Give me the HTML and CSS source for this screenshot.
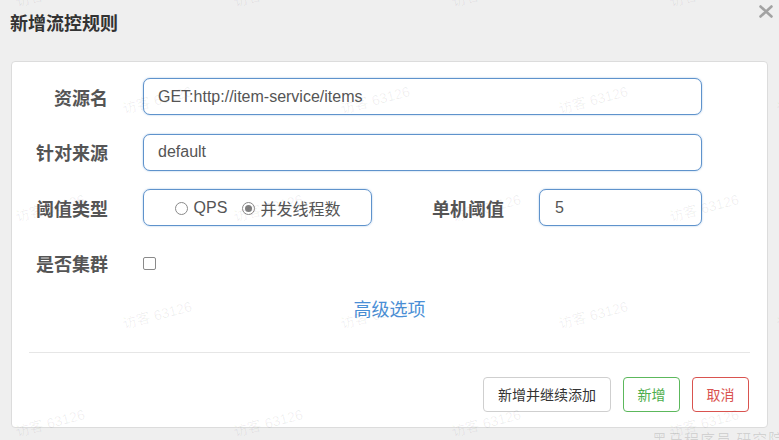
FILE: index.html
```html
<!DOCTYPE html>
<html lang="zh-CN">
<head>
<meta charset="utf-8">
<title>新增流控规则</title>
<link rel="stylesheet" href="styles.css">
</head>
<body>
<header class="dlg-head">
  <h1 class="dlg-title">新增流控规则</h1>
  <span class="dlg-close" aria-label="关闭"><svg width="14" height="13" viewBox="0 0 14 13"><path d="M1.5 1.5 L12.5 11.5 M12.5 1.5 L1.5 11.5" stroke="#a3a3a3" stroke-width="2.6" stroke-linecap="round"/></svg></span>
</header>
<section class="card">
  <div class="form-row">
    <label class="f-label">资源名</label>
    <input class="f-input f-wide" value="GET:http://item-service/items" readonly>
  </div>
  <div class="form-row">
    <label class="f-label">针对来源</label>
    <input class="f-input f-wide" value="default" readonly>
  </div>
  <div class="form-row">
    <label class="f-label">阈值类型</label>
    <div class="radio-box">
      <span class="radio"></span><span class="radio-text">QPS</span>
      <span class="radio radio-on"></span><span class="radio-text radio-text-cn">并发线程数</span>
    </div>
    <label class="f-label f-label-mid">单机阈值</label>
    <input class="f-input f-small" value="5" readonly>
  </div>
  <div class="form-row">
    <label class="f-label">是否集群</label>
    <span class="checkbox"></span>
  </div>
  <div class="adv-link">高级选项</div>
  <div class="divider"></div>
  <div class="btn-row">
    <button class="btn">新增并继续添加</button>
    <button class="btn btn-ok">新增</button>
    <button class="btn btn-cancel">取消</button>
  </div>
</section>
<div class="wm-clip">
  <div class="wm-layer">
    <div class="wm-row wm-row-b"><span class="wm-cell">访客 63126</span><span class="wm-cell">访客 63126</span><span class="wm-cell">访客 63126</span><span class="wm-cell">访客 63126</span><span class="wm-cell">访客 63126</span></div>
    <div class="wm-row wm-row-a"><span class="wm-cell">访客 63126</span><span class="wm-cell">访客 63126</span><span class="wm-cell">访客 63126</span><span class="wm-cell">访客 63126</span><span class="wm-cell">访客 63126</span></div>
    <div class="wm-row wm-row-b"><span class="wm-cell">访客 63126</span><span class="wm-cell">访客 63126</span><span class="wm-cell">访客 63126</span><span class="wm-cell">访客 63126</span><span class="wm-cell">访客 63126</span></div>
    <div class="wm-row wm-row-a"><span class="wm-cell">访客 63126</span><span class="wm-cell">访客 63126</span><span class="wm-cell">访客 63126</span><span class="wm-cell">访客 63126</span><span class="wm-cell">访客 63126</span></div>
    <div class="wm-row wm-row-b"><span class="wm-cell">访客 63126</span><span class="wm-cell">访客 63126</span><span class="wm-cell">访客 63126</span><span class="wm-cell">访客 63126</span><span class="wm-cell">访客 63126</span></div>
  </div>
  <div class="wm-foot">黑马程序员 研究院</div>
</div>
</body>
</html>
```
FILE: styles.css
```css
* { box-sizing: border-box; }
html, body { margin: 0; padding: 0; }
body {
  background: #efefef;
  font-family: "Liberation Sans", "Noto Sans CJK SC", sans-serif;
  width: 779px;
  height: 440px;
  overflow: hidden;
  position: relative;
}
.dlg-head {
  height: 61px;
  display: flex;
  justify-content: space-between;
  align-items: flex-start;
  padding: 0 6px 0 10px;
}
.dlg-title {
  margin: 0;
  padding-top: 10px;
  font-size: 18px;
  line-height: 24px;
  font-weight: bold;
  color: #333;
  font-family: "Noto Sans CJK SC", sans-serif;
}
.dlg-close { margin-top: 5px; display: block; line-height: 0; }
.card {
  margin: 0 11px;
  height: 367px;
  background: #fff;
  border: 1px solid #dcdcdc;
  border-radius: 4px;
  padding: 16px 0 15px;
}
.form-row {
  display: flex;
  align-items: center;
  height: 37px;
  margin-bottom: 18.5px;
}
.form-row:nth-child(4) { margin-bottom: 0; }
.f-label {
  flex: none;
  width: 96px;
  margin-right: 35px;
  text-align: right;
  font-family: "Noto Sans CJK SC", sans-serif;
  font-size: 18px;
  font-weight: bold;
  color: #555;
  line-height: 24px;
}
.f-label-mid { width: 132px; }
.f-input {
  flex: none;
  height: 37px;
  padding: 0 14px;
  border: 1px solid #5f93cc;
  border-radius: 7px;
  box-shadow: 0 0 2px rgba(82, 142, 204, 0.55);
  font-family: "Liberation Sans", "Noto Sans CJK SC", sans-serif;
  font-size: 16px;
  color: #555;
  background: #fff;
  outline: none;
}
.f-wide { width: 559px; }
.f-small { width: 163px; padding-left: 15px; }
.radio-box {
  flex: none;
  width: 229px;
  height: 37px;
  border: 1px solid #5f93cc;
  border-radius: 7px;
  box-shadow: 0 0 2px rgba(82, 142, 204, 0.55);
  display: flex;
  align-items: center;
  justify-content: center;
  padding-top: 1px;
}
.radio {
  flex: none;
  width: 13px;
  height: 13px;
  border: 1px solid #8a8a8a;
  border-radius: 50%;
  background: #fff;
  position: relative;
  margin-right: 6px;
}
.radio-on { margin-right: 5px; }
.radio-on::after {
  content: "";
  position: absolute;
  left: 2px;
  top: 2px;
  width: 7px;
  height: 7px;
  border-radius: 50%;
  background: #808080;
}
.radio-text {
  font-size: 16px;
  color: #555;
  line-height: 20px;
  margin-right: 15px;
}
.radio-text-cn { margin-right: 0; font-family: "Noto Sans CJK SC", sans-serif; }
.checkbox {
  flex: none;
  width: 13px;
  height: 13px;
  border: 1px solid #8a8a8a;
  border-radius: 2px;
  background: #fff;
}
.adv-link {
  margin-top: 14.5px;
  text-align: center;
  font-family: "Noto Sans CJK SC", sans-serif;
  font-size: 18px;
  line-height: 24px;
  color: #4a8fd6;
}
.divider {
  margin: 32px 17px 0;
  height: 1px;
  background: #e6e6e6;
}
.btn-row {
  margin-top: 24px;
  display: flex;
  justify-content: flex-end;
  gap: 12px;
  padding-right: 18px;
}
.btn {
  height: 35px;
  padding: 0 14px;
  border: 1px solid #cfcfcf;
  border-radius: 4px;
  background: #fff;
  font-family: "Noto Sans CJK SC", sans-serif;
  font-size: 14px;
  line-height: 33px;
  color: #333;
}
.btn-ok { border-color: #5cb85c; color: #4cae4c; padding: 0 13.5px; }
.btn-cancel { border-color: #d9534f; color: #d9534f; padding: 0 13.5px; }
.wm-clip {
  position: absolute;
  left: 0;
  top: 0;
  width: 779px;
  height: 440px;
  overflow: hidden;
  pointer-events: none;
}
.wm-layer {
  margin-top: -62px;
  display: flex;
  flex-direction: column;
}
.wm-row {
  flex: none;
  height: 107.5px;
  display: flex;
  align-items: center;
}
.wm-row-b { margin-left: -59px; }
.wm-row-a { margin-left: -170px; }
.wm-cell {
  flex: none;
  width: 218px;
  text-align: center;
  font-family: "Liberation Sans", "Noto Sans CJK SC", sans-serif;
  font-size: 14px;
  color: rgba(0, 0, 0, 0.065);
  white-space: nowrap;
  transform: rotate(-15deg);
}
.wm-foot {
  position: absolute;
  left: 652px;
  top: 428px;
  font-family: "Noto Sans CJK SC", sans-serif;
  font-size: 15px;
  letter-spacing: 1px;
  color: rgba(0, 0, 0, 0.12);
  white-space: nowrap;
}
```
